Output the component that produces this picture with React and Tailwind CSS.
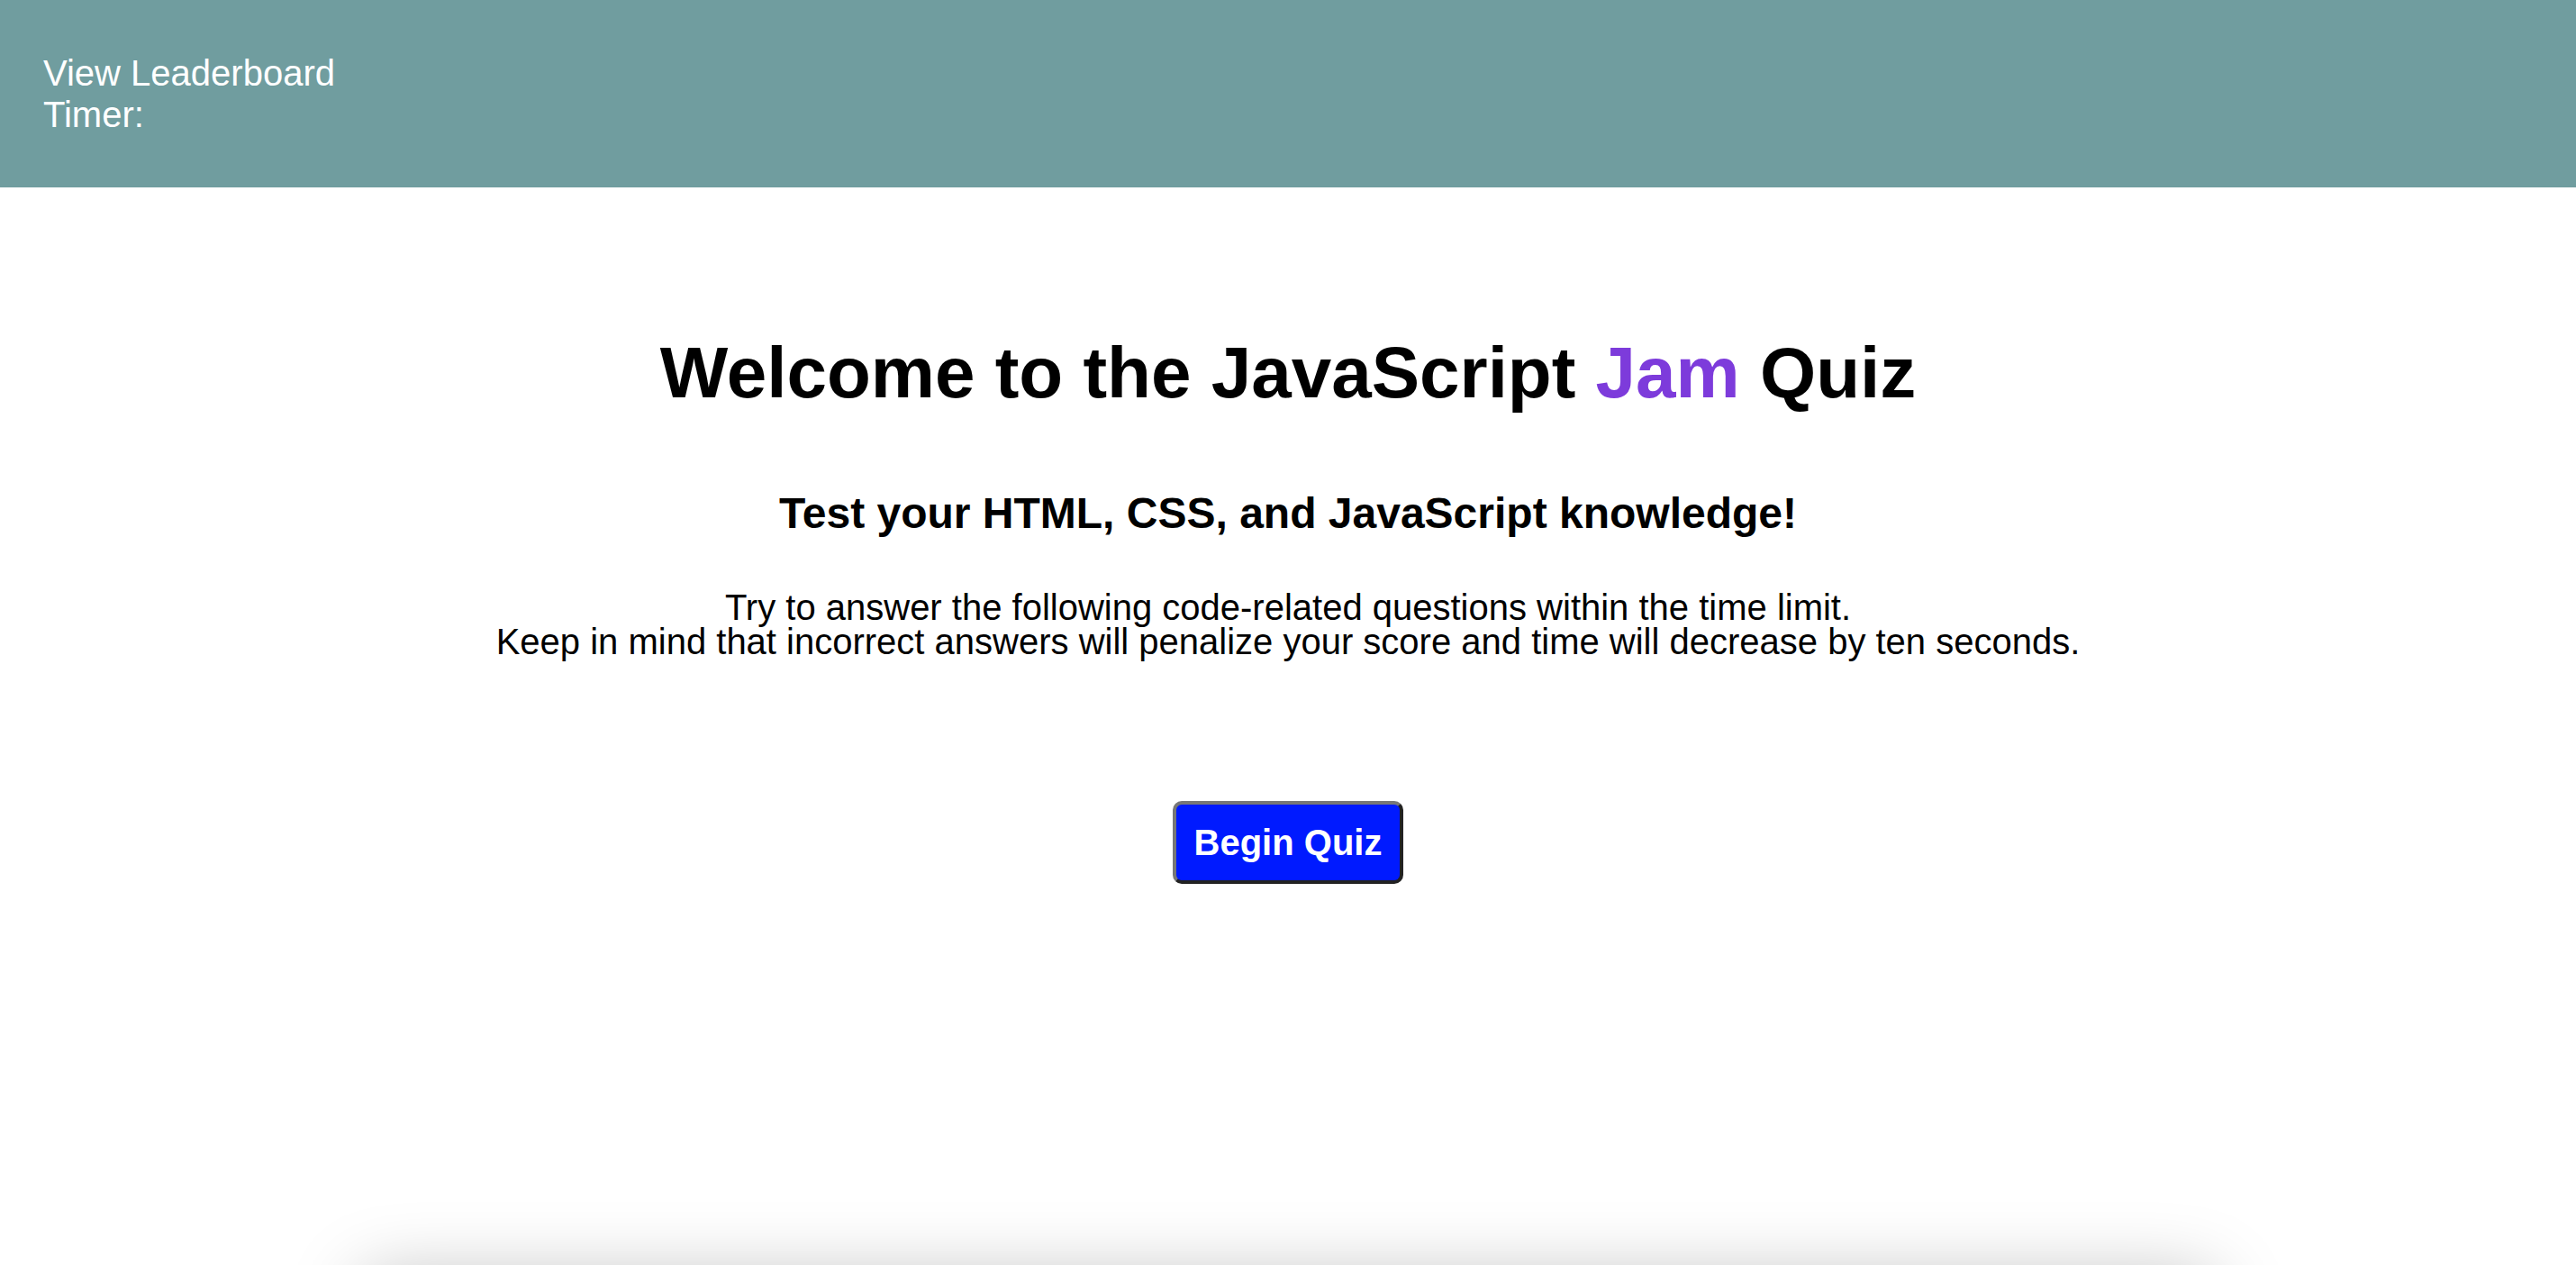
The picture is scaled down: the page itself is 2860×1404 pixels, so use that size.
export default function App() {
  return (
    <div className="min-h-screen bg-white" style={{ fontFamily: '"Liberation Sans", Arial, sans-serif' }}>
      <header className="h-[208px] bg-[#709d9f] px-[48px] flex flex-col justify-center text-white text-[40px] leading-[46px]">
        <div>View Leaderboard</div>
        <div>Timer:</div>
      </header>
      <main className="flex flex-col items-center text-black">
        <h1 className="mt-[160px] text-[80px] leading-[92px] font-bold">
          Welcome to the JavaScript <span className="text-[#7d3bdb]">Jam</span> Quiz
        </h1>
        <h2 className="mt-[82px] text-[48px] leading-[55px] font-bold">
          Test your HTML, CSS, and JavaScript knowledge!
        </h2>
        <p className="mt-[58px] text-[40px] leading-[38px] text-center">
          Try to answer the following code-related questions within the time limit.
          <br />
          Keep in mind that incorrect answers will penalize your score and time will decrease by ten seconds.
        </p>
        <button className="mt-[158px] bg-[#001aff] text-white font-bold text-[40px] leading-[46px] px-[20px] py-[19px] rounded-[10px] border-[4px] border-t-[#777777] border-l-[#777777] border-b-[#222222] border-r-[#222222]">
          Begin Quiz
        </button>
        <div className="mt-[436px] w-[72%] h-[400px] bg-white rounded-[24px] shadow-[0_0_80px_rgba(0,0,0,0.26)]"></div>
      </main>
    </div>
  );
}
